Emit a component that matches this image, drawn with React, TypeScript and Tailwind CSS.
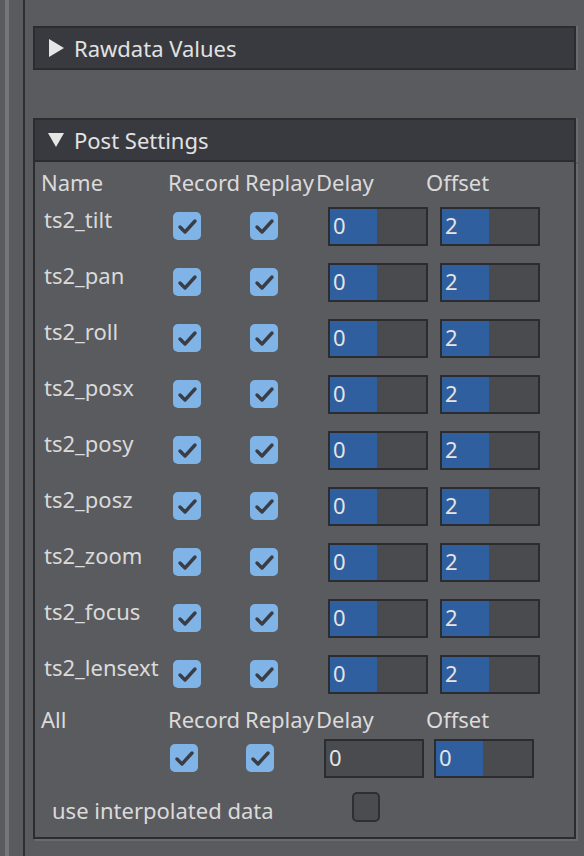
import React from 'react'

const channels = ['ts2_tilt', 'ts2_pan', 'ts2_roll', 'ts2_posx', 'ts2_posy', 'ts2_posz', 'ts2_zoom', 'ts2_focus', 'ts2_lensext']

function Check({ on = true }: { on?: boolean }) {
  if (!on) {
    return <div className="w-[28px] h-[30px] rounded-[5px] border-2 border-[#2e2f33] bg-[#4b4c50]" />
  }
  return (
    <div className="w-[28px] h-[28px] rounded-[5px] bg-[#80b4e6] flex items-center justify-center">
      <svg width="28" height="28" viewBox="0 0 28 28">
        <polyline points="7,15 12,20 22,9" fill="none" stroke="#3a3d44" strokeWidth="3.4" strokeLinecap="round" strokeLinejoin="round" />
      </svg>
    </div>
  )
}

function NumBox({ value, filled = true }: { value: string; filled?: boolean }) {
  return (
    <div
      className={
        'w-[100px] h-[39px] border-2 border-[#2b2c30] flex items-center pl-[3px] pb-[2px] text-[#e4e4e4] ' +
        (filled
          ? 'bg-[linear-gradient(to_right,#2f5f9e_47px,#4a4b4f_47px)]'
          : 'bg-[#4a4b4f]')
      }
    >
      {value}
    </div>
  )
}

function Section({ title, open }: { title: string; open?: boolean }) {
  return (
    <div className="h-[44px] border-2 border-[#2b2c30] bg-[#393a3f] flex items-center gap-[10px] pl-[13px] text-[#e2e2e2] shadow-[2px_0_0_#6a6b70]">
      {open ? (
        <svg width="16" height="16" viewBox="0 0 16 16">
          <polygon points="0,1 16,1 8,15" fill="#e6e6e6" />
        </svg>
      ) : (
        <svg width="16" height="18" viewBox="0 0 16 18">
          <polygon points="1,0 16,9 1,18" fill="#e6e6e6" />
        </svg>
      )}
      <span>{title}</span>
    </div>
  )
}

function LabelRow({ first, className }: { first: string; className: string }) {
  return (
    <div className={'grid grid-cols-[127px_77px_71px_110px_1fr] ' + className}>
      <span>{first}</span>
      <span>Record</span>
      <span>Replay</span>
      <span>Delay</span>
      <span>Offset</span>
    </div>
  )
}

export default function App() {
  return (
    <div className="w-[584px] h-[856px] bg-[#5a5b5f] flex font-['Noto_Sans',sans-serif] text-[22px] leading-[24px] text-[#dadada] overflow-hidden">
      {/* left splitter */}
      <div className="flex h-full shrink-0">
        <div className="w-[5px]" />
        <div className="w-[4px] bg-[#74767a]" />
        <div className="w-[14px]" />
        <div className="w-[2px] bg-[#2e2f33]" />
      </div>

      <div className="flex-1 pl-[8px] pr-[8px] pt-[26px]">
        <Section title="Rawdata Values" />

        <div className="mt-[48px]">
          <Section title="Post Settings" open />
          <div className="border-2 border-t-0 border-[#2b2c30] pl-[6px] pb-[7px] shadow-[2px_2px_0_#6a6b70]">
            <LabelRow first="Name" className="pt-[8px] pb-[4px]" />

            {channels.map(name => (
              <div key={name} className="grid grid-cols-[127px_77px_71px_110px_1fr] h-[56px] items-center">
                <span className="pl-[3px] mb-[14px]">{name}</span>
                <div className="pl-[5px]"><Check /></div>
                <div className="pl-[5px]"><Check /></div>
                <div className="pl-[12px]"><NumBox value="0" /></div>
                <div className="pl-[14px]"><NumBox value="2" /></div>
              </div>
            ))}

            <LabelRow first="All" className="pt-[5px] h-[30px]" />
            <div className="grid grid-cols-[127px_77px_71px_110px_1fr] h-[52px] items-center">
              <span />
              <div className="pl-[2px]"><Check /></div>
              <div className="pl-[1px]"><Check /></div>
              <div className="pl-[8px]"><NumBox value="0" filled={false} /></div>
              <div className="pl-[8px]"><NumBox value="0" /></div>
            </div>

            <div className="flex items-center h-[46px]">
              <span className="w-[311px] pl-[11px] pt-[6px]">use interpolated data</span>
              <Check on={false} />
            </div>
          </div>
        </div>
      </div>
    </div>
  )
}
